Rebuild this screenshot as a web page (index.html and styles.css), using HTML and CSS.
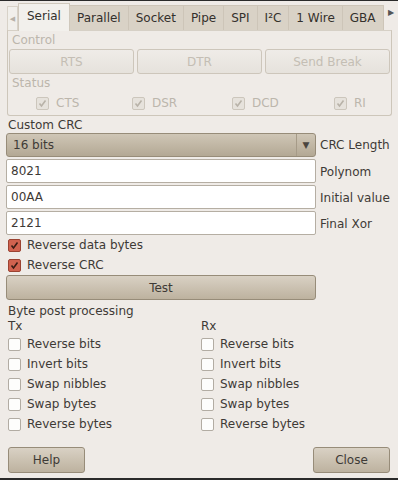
FILE: index.html
```html
<!DOCTYPE html>
<html lang="en">
<head>
    <meta charset="UTF-8">
    <meta name="viewport" content="width=device-width, initial-scale=1.0">
    <title>Settings</title>
    <link rel="stylesheet" href="styles.css">
</head>
<body>
    <div class="window">
        <div class="tabs">
            <span class="tab-arrow left">&#9664;</span>
            <span class="tab active">Serial</span>
            <span class="tab">Parallel</span>
            <span class="tab">Socket</span>
            <span class="tab">Pipe</span>
            <span class="tab">SPI</span>
            <span class="tab">I²C</span>
            <span class="tab">1 Wire</span>
            <span class="tab">GBA</span>
            <span class="tab-arrow right">&#9654;</span>
        </div>

        <div class="notebook">
            <div class="label disabled">Control</div>
            <div class="btn-row">
                <button class="btn flat" disabled>RTS</button>
                <button class="btn flat" disabled>DTR</button>
                <button class="btn flat" disabled>Send Break</button>
            </div>
            <div class="label disabled">Status</div>
            <div class="status-row">
                <span class="check dis on">CTS</span>
                <span class="check dis on">DSR</span>
                <span class="check dis on">DCD</span>
                <span class="check dis on">RI</span>
            </div>
        </div>

        <div class="label section">Custom CRC</div>
        <div class="field-row first">
            <div class="combo">
                <span class="combo-text">16 bits</span>
                <span class="combo-arrow">&#9660;</span>
            </div>
            <span class="field-label">CRC Length</span>
        </div>
        <div class="field-row">
            <input class="entry" type="text" value="8021">
            <span class="field-label">Polynom</span>
        </div>
        <div class="field-row">
            <input class="entry" type="text" value="00AA">
            <span class="field-label">Initial value</span>
        </div>
        <div class="field-row">
            <input class="entry" type="text" value="2121">
            <span class="field-label">Final Xor</span>
        </div>

        <div class="check-line"><span class="check on">Reverse data bytes</span></div>
        <div class="check-line"><span class="check on">Reverse CRC</span></div>
        <div class="test-row">
            <button class="btn test">Test</button>
        </div>

        <div class="label post-title">Byte post processing</div>
        <div class="post">
            <div class="post-col">
                <div class="label">Tx</div>
                <div class="check-line"><span class="check">Reverse bits</span></div>
                <div class="check-line"><span class="check">Invert bits</span></div>
                <div class="check-line"><span class="check">Swap nibbles</span></div>
                <div class="check-line"><span class="check">Swap bytes</span></div>
                <div class="check-line"><span class="check">Reverse bytes</span></div>
            </div>
            <div class="post-col">
                <div class="label">Rx</div>
                <div class="check-line"><span class="check">Reverse bits</span></div>
                <div class="check-line"><span class="check">Invert bits</span></div>
                <div class="check-line"><span class="check">Swap nibbles</span></div>
                <div class="check-line"><span class="check">Swap bytes</span></div>
                <div class="check-line"><span class="check">Reverse bytes</span></div>
            </div>
        </div>

        <div class="actions">
            <button class="btn dialog">Help</button>
            <button class="btn dialog">Close</button>
        </div>
    </div>
</body>
</html>
```

FILE: styles.css
```css
*{
    box-sizing: border-box;
    font-family: "DejaVu Sans", sans-serif;
}
body{
    margin: 0;
    padding: 0;
    background-color: #efebe7;
}
.window{
    width: 398px;
    height: 480px;
    border-top: 1px solid #2a2a2a;
    border-bottom: 2px solid #2a2a2a;
    padding: 2px 6px 0px 6px;
    color: #3e3a36;
    font-size: 12px;
}

/* tab strip */
.tabs{
    display: flex;
    align-items: flex-end;
    height: 27px;
    white-space: nowrap;
}
.tab-arrow{
    flex-shrink: 0;
    width: 11px;
    height: 24px;
    font-size: 7px;
    color: #8c867c;
    line-height: 24px;
    text-align: center;
}
.tab-arrow.left{
    background-color: #f1efeb;
    border: 1px solid #d8d2c8;
    border-bottom: none;
    margin-left: 1px;
    color: #b8b2a8;
}
.tab-arrow.right{
    margin-left: 2px;
    color: #555;
    font-size: 8px;
    height: 27px;
    line-height: 20px;
}
.tab{
    flex-shrink: 0;
    height: 25px;
    line-height: 24px;
    padding: 0px 7px;
    font-size: 12px;
    background-color: #d9d2c6;
    border: 1px solid #cdc5b8;
    border-bottom: none;
    border-left: none;
    color: #34302c;
}
.tab.active{
    height: 28px;
    background-color: #f2f0ec;
    border: 1px solid #cfc8bc;
    border-bottom: none;
    padding: 0px 8px;
    margin-bottom: -1px;
    position: relative;
}
.notebook{
    border: 1px solid #cdc6ba;
    border-top-color: #d6d0c6;
    border-radius: 0px 0px 3px 3px;
    margin: 0px 0px 0px 1px;
    padding: 2px 1px 6px 2px;
    height: 86px;
}

.label{
    height: 15px;
    line-height: 15px;
    padding-left: 2px;
}
.label.disabled{
    color: #bcb6ac;
}
.label.section{
    margin-top: 2px;
}

.btn{
    font-family: "DejaVu Sans", sans-serif;
    font-size: 12px;
    color: #3e3a36;
    border: 1px solid #978c79;
    border-radius: 3px;
    background: linear-gradient(#d9d1c4, #bdb29f);
    padding: 0;
}
.btn-row{
    display: flex;
    gap: 3px;
    margin: 1px 0px 2px -1px;
}
.btn.flat{
    flex: 1;
    height: 25px;
    background: linear-gradient(#efece8, #e6e2dc);
    border-color: #cdc6bb;
    color: #c4beb4;
}
.status-row{
    display: flex;
    height: 18px;
    margin-top: 3px;
    align-items: center;
    padding-left: 26px;
}
.status-row .check{
    width: 96px;
}
.status-row .check:nth-child(2){ width: 100px; }
.status-row .check:nth-child(3){ width: 102px; }
.status-row .check:nth-child(4){ width: auto; }

/* checkboxes */
.check{
    display: inline-flex;
    align-items: center;
    gap: 6px;
    white-space: nowrap;
}
.check::before{
    content: "";
    width: 11px;
    height: 11px;
    border: 1px solid #b2aca3;
    border-radius: 2px;
    background: #fdfdfc;
}
.check.on::before{
    border-color: #9b4332;
    background: #d0624f url("data:image/svg+xml;utf8,<svg xmlns='http://www.w3.org/2000/svg' width='11' height='11'><path d='M2.5 5.5 L4.5 8 L8.5 2.5' fill='none' stroke='%233a1c14' stroke-width='1.6'/></svg>") center no-repeat;
}
.check.dis{
    color: #bcb6ac;
    gap: 7px;
}
.check.dis.on::before{
    border-color: #ccc6bc;
    background: #e6e2dc url("data:image/svg+xml;utf8,<svg xmlns='http://www.w3.org/2000/svg' width='11' height='11'><path d='M2.5 5.5 L4.5 8 L8.5 2.5' fill='none' stroke='%23b8b2a8' stroke-width='1.6'/></svg>") center no-repeat;
}
.check-line{
    height: 20px;
    display: flex;
    align-items: center;
    padding-left: 2px;
}

/* crc fields */
.field-row{
    display: flex;
    align-items: center;
    gap: 4px;
    margin-top: 2px;
}
.field-row.first{
    margin-top: 0px;
}
.combo{
    width: 310px;
    height: 24px;
    display: flex;
    align-items: center;
    border: 1px solid #978c79;
    border-radius: 3px;
    background: linear-gradient(#cfc6b6, #b3a894);
}
.combo-text{
    flex: 1;
    padding-left: 6px;
    font-size: 12px;
}
.combo-arrow{
    width: 19px;
    height: 22px;
    line-height: 22px;
    text-align: center;
    border-left: 1px solid #a69b88;
    font-size: 9px;
    color: #4a453f;
}
.entry{
    width: 310px;
    height: 24px;
    border: 1px solid #b5aea3;
    border-radius: 2px;
    background: #ffffff;
    padding: 0px 4px;
    font-size: 12px;
    color: #3e3a36;
    margin: 0;
}
.field-label{
    white-space: nowrap;
}
.field-row .entry + .field-label{
    margin-top: 2px;
}
.test-row{
    display: flex;
}
.btn.test{
    width: 310px;
    height: 25px;
}

/* post processing */
.post-title{
    margin-top: 4px;
}
.post{
    display: flex;
}
.post-col{
    width: 194px;
}

.actions{
    display: flex;
    justify-content: space-between;
    padding: 13px 2px 0px 2px;
}
.btn.dialog{
    width: 77px;
    height: 26px;
}
```
